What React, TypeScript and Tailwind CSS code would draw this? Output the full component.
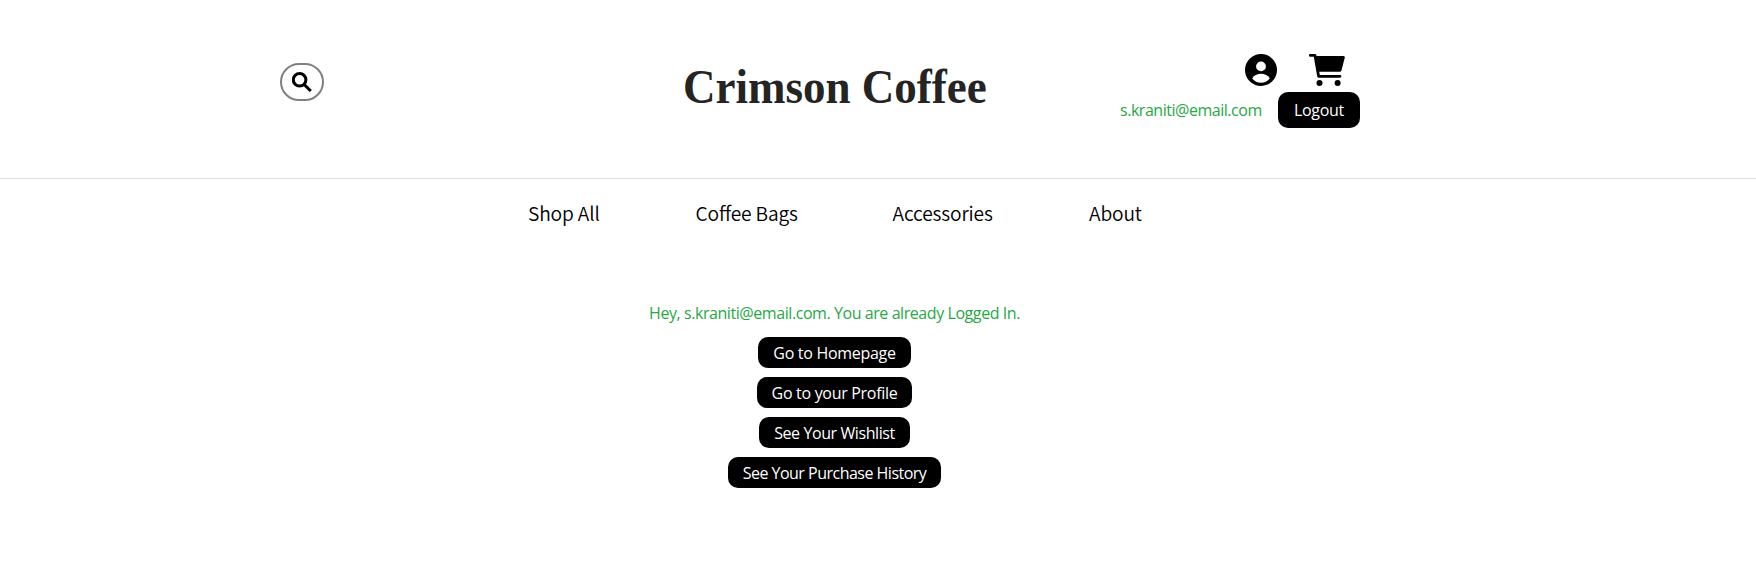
import type { ReactNode } from "react";

const actions = [
  { label: "Go to Homepage", style: "w-[153px] tracking-[-0.3px]" },
  { label: "Go to your Profile", style: "w-[155px] tracking-[-0.3px]" },
  { label: "See Your Wishlist", style: "w-[151px] tracking-[-0.41px]" },
  { label: "See Your Purchase History", style: "w-[213px] tracking-[-0.51px]" },
];

function Action({ style, children }: { style: string; children: ReactNode }) {
  return (
    <button className={`${style} h-[31px] rounded-[10px] bg-black pt-px text-white whitespace-nowrap`}>
      {children}
    </button>
  );
}

function SearchIcon() {
  return (
    <svg width="20" height="20" viewBox="0 0 20 20" fill="none" stroke="black" strokeWidth="3">
      <circle cx="7.6" cy="7.8" r="6.3" />
      <path d="M11.8 12.2 18.8 19" />
    </svg>
  );
}

function AccountIcon() {
  return (
    <svg width="32" height="32" viewBox="0 0 32 32">
      <circle cx="16" cy="16" r="16" />
      <circle cx="16" cy="12.4" r="4.9" fill="white" />
      <path d="M7.2 24.4C9 21.4 12.3 19.8 16 19.8s7 1.6 8.8 4.6C22.6 27.2 19.4 28.7 16 28.7s-6.6-1.5-8.8-4.3z" fill="white" />
    </svg>
  );
}

function CartIcon() {
  return (
    <svg width="36" height="32" viewBox="0 0 36 32">
      <path d="M1.3 1.4H6L9.6 22.3H31" fill="none" stroke="black" strokeWidth="2.8" strokeLinecap="round" strokeLinejoin="round" />
      <path d="M5.5 2H34.5Q36 2.1 35.8 3.6L32.5 16.3Q32.1 17.8 30.6 17.8H8.3z" />
      <circle cx="10.5" cy="29" r="3" />
      <circle cx="28.6" cy="29" r="3" />
    </svg>
  );
}

export default function App() {
  return (
    <div className="min-h-[577px] bg-white font-['Open_Sans',sans-serif] text-[16px] leading-6">
      <header className="h-[179px] border-b border-[#dedede]">
        <div className="flex items-start pl-[280px]">
          <button className="mt-[63px] flex h-[38px] w-11 items-center justify-center rounded-[19px] border-2 border-[#808080]">
            <SearchIcon />
          </button>
          <h1 className="mt-[59px] ml-[359px] w-[305px] origin-left scale-x-[0.9375] font-['Liberation_Serif',serif] text-[48px] leading-[56px] font-bold whitespace-nowrap text-[#242424]">
            Crimson Coffee
          </h1>
          <div className="mt-[54px] ml-[132px] w-[240px]">
            <div className="flex justify-end gap-8 pr-[15.5px]">
              <AccountIcon />
              <CartIcon />
            </div>
            <div className="mt-1.5 flex items-center justify-between">
              <span className="tracking-[-0.47px] text-[#28a745]">s.kraniti@email.com</span>
              <button className="h-9 w-[82px] rounded-[10px] bg-black tracking-[-0.3px] text-white">Logout</button>
            </div>
          </div>
        </div>
      </header>
      <nav className="flex pt-[19px] pl-[528px] font-['Noto_Sans_CJK_JP',sans-serif] text-[19.2px] leading-[30px] font-[350] tracking-[-0.14px] whitespace-nowrap text-black [font-feature-settings:'liga']">
        <a className="w-[167.5px]">Shop All</a>
        <a className="w-[197px]">Coffee Bags</a>
        <a className="w-[196.5px]">Accessories</a>
        <a>About</a>
      </nav>
      <main className="flex w-[1669px] flex-col items-center gap-[9px] pt-[73px]">
        <p className="mb-[3px] tracking-[-0.43px] text-[#28a745]">Hey, s.kraniti@email.com. You are already Logged In.</p>
        {actions.map((a) => (
          <Action key={a.label} style={a.style}>{a.label}</Action>
        ))}
      </main>
    </div>
  );
}
